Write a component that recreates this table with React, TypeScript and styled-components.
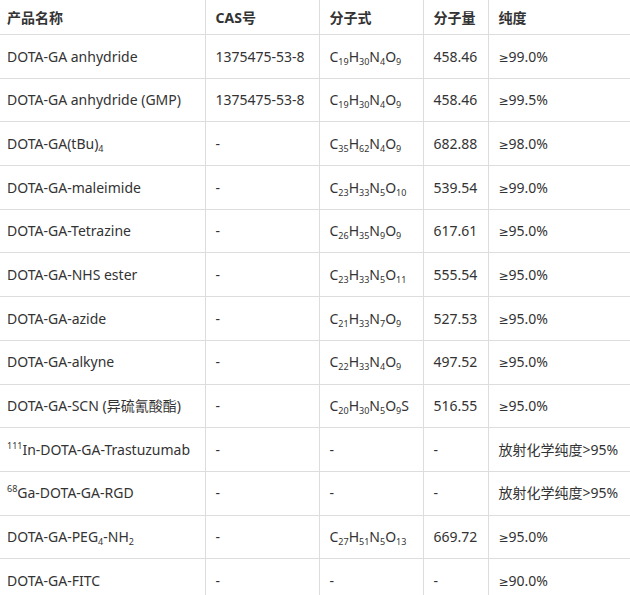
import React from "react";
import styled, { createGlobalStyle } from "styled-components";

const Global = createGlobalStyle`
  html, body { margin: 0; padding: 0; background: #fff; }
  body { font-family: "Noto Sans", "Noto Sans CJK SC", sans-serif; color: #333; }
`;

const Wrap = styled.div`
  width: 630px;
  height: 595px;
  overflow: hidden;
`;

const Table = styled.table`
  border-collapse: collapse;
  table-layout: fixed;
  width: 640px;
  font-size: 14px;
`;

const Cell = styled.td`
  padding: 11.6px 10px 11.1px;
  line-height: 20px;
  border-bottom: 1px solid #dddddd;
  border-right: 1px solid #dddddd;
  white-space: nowrap;
  vertical-align: middle;
  text-align: left;
  color: #333;
  &:first-child { padding-left: 7px; }
  &:last-child { border-right: none; }
`;

const HeadCell = styled(Cell).attrs({ as: "th" })`
  padding-top: 7px;
  padding-bottom: 6px;
  font-weight: bold;
  line-height: 21px;
`;

const Sub = styled.sub`
  font-size: 9px;
  line-height: 0;
  vertical-align: baseline;
  position: relative;
  top: 3px;
`;

const Sup = styled.sup`
  font-size: 9px;
  line-height: 0;
  vertical-align: baseline;
  position: relative;
  top: -6px;
`;

const Sym = styled.span`
  font-family: "DejaVu Sans", sans-serif;
  font-size: 12px;
  line-height: 0;
`;

type Part = string | { s: string } | { p: string } | { g: string };

const F: React.FC<{ parts: Part[] }> = ({ parts }) => (
  <>
    {parts.map((p, i) =>
      typeof p === "string" ? (
        <React.Fragment key={i}>{p}</React.Fragment>
      ) : "s" in p ? (
        <Sub key={i}>{p.s}</Sub>
      ) : "p" in p ? (
        <Sup key={i}>{p.p}</Sup>
      ) : (
        <Sym key={i}>{p.g}</Sym>
      )
    )}
  </>
);

const f = (str: string): Part[] => {
  const out: Part[] = [];
  const re = /([_^])(\d+)|(≥)|([^_^≥]+)/g;
  let m: RegExpExecArray | null;
  while ((m = re.exec(str))) {
    if (m[4]) out.push(m[4]);
    else if (m[3]) out.push({ g: m[3] });
    else if (m[1] === "_") out.push({ s: m[2] });
    else out.push({ p: m[2] });
  }
  return out;
};

const rows: [string, string, string, string, string][] = [
  ["DOTA-GA anhydride", "1375475-53-8", "C_19H_30N_4O_9", "458.46", "≥99.0%"],
  ["DOTA-GA anhydride (GMP)", "1375475-53-8", "C_19H_30N_4O_9", "458.46", "≥99.5%"],
  ["DOTA-GA(tBu)_4", "-", "C_35H_62N_4O_9", "682.88", "≥98.0%"],
  ["DOTA-GA-maleimide", "-", "C_23H_33N_5O_10", "539.54", "≥99.0%"],
  ["DOTA-GA-Tetrazine", "-", "C_26H_35N_9O_9", "617.61", "≥95.0%"],
  ["DOTA-GA-NHS ester", "-", "C_23H_33N_5O_11", "555.54", "≥95.0%"],
  ["DOTA-GA-azide", "-", "C_21H_33N_7O_9", "527.53", "≥95.0%"],
  ["DOTA-GA-alkyne", "-", "C_22H_33N_4O_9", "497.52", "≥95.0%"],
  ["DOTA-GA-SCN (异硫氰酸酯)", "-", "C_20H_30N_5O_9S", "516.55", "≥95.0%"],
  ["^111In-DOTA-GA-Trastuzumab", "-", "-", "-", "放射化学纯度>95%"],
  ["^68Ga-DOTA-GA-RGD", "-", "-", "-", "放射化学纯度>95%"],
  ["DOTA-GA-PEG_4-NH_2", "-", "C_27H_51N_5O_13", "669.72", "≥95.0%"],
  ["DOTA-GA-FITC", "-", "-", "-", "≥90.0%"],
];

const widths = [205, 114, 104, 65, 152];

export default function App() {
  return (
    <Wrap>
      <Global />
      <Table>
        <colgroup>
          {widths.map((w, i) => (
            <col key={i} style={{ width: w }} />
          ))}
        </colgroup>
        <thead>
          <tr>
            <HeadCell>产品名称</HeadCell>
            <HeadCell>CAS号</HeadCell>
            <HeadCell>分子式</HeadCell>
            <HeadCell>分子量</HeadCell>
            <HeadCell>纯度</HeadCell>
          </tr>
        </thead>
        <tbody>
          {rows.map((r, i) => (
            <tr key={i}>
              {r.map((c, j) => (
                <Cell key={j}>
                  <F parts={f(c)} />
                </Cell>
              ))}
            </tr>
          ))}
        </tbody>
      </Table>
    </Wrap>
  );
}
